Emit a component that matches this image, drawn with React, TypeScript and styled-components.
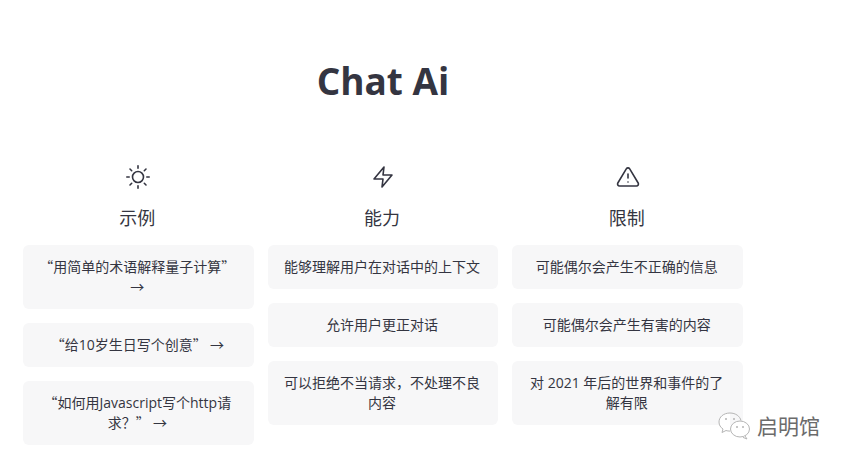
import styled, { createGlobalStyle } from "styled-components"
import { FiZap, FiAlertTriangle } from "react-icons/fi"

const GlobalStyle = createGlobalStyle`
  html, body {
    margin: 0;
    padding: 0;
    background: #fff;
  }
  * {
    box-sizing: border-box;
  }
`

const Page = styled.div`
  position: relative;
  width: 847px;
  height: 463px;
  overflow: hidden;
  padding: 53px 0 0 23px;
  color: #343541;
  font-family: "Open Sans", "Noto Sans CJK SC", sans-serif;
`

const Content = styled.div`
  width: 720px;
`

const Title = styled.h1`
  margin: 0 0 56px;
  height: 56px;
  line-height: 56px;
  font-size: 37px;
  font-weight: 700;
  text-align: center;
`

const Columns = styled.div`
  display: grid;
  grid-template-columns: repeat(3, minmax(0, 1fr));
  column-gap: 14px;
`

const Column = styled.div`
  display: flex;
  flex-direction: column;
  align-items: center;
`

const IconSlot = styled.div`
  display: flex;
  height: 24px;
  margin-bottom: 17px;
  font-size: 24px;
`

const Heading = styled.h2`
  margin: 0 2px 15px 0;
  height: 24px;
  line-height: 24px;
  font-size: 18px;
  font-weight: 400;
`

const CardList = styled.ul`
  width: 100%;
  margin: 0;
  padding: 0;
  list-style: none;
  display: flex;
  flex-direction: column;
  gap: 14px;
`

const Card = styled.li`
  padding: 12px 14px 12px 12px;
  border-radius: 6px;
  background: #f7f7f8;
  font-size: 14px;
  line-height: 20px;
  text-align: center;
`

// quotes and the arrow are full-width glyphs in the reference
const Wide = styled.span`
  font-family: "Noto Sans CJK SC", sans-serif;
  line-height: 0;
`

const Watermark = styled.div`
  position: absolute;
  right: 27px;
  top: 408px;
  display: flex;
  align-items: center;
  gap: 6px;
  color: #6b6b6b;
  font-size: 21px;
  line-height: 36px;
`

function SunIcon() {
  return (
    <svg width="24" height="24" viewBox="0 0 24 24" fill="none" stroke="currentColor" strokeWidth="1.6" strokeLinecap="round">
      <circle cx="12" cy="12" r="5.5" />
      <path d="M12 .8v2.4M12 20.8v2.4M.8 12h2.4M20.8 12h2.4M4 4l1.7 1.7M18.3 18.3L20 20M4 20l1.7-1.7M18.3 5.7L20 4" />
    </svg>
  )
}

function WechatMark() {
  return (
    <svg width="34" height="30" viewBox="0 0 34 30" fill="none" stroke="#b5b5b5" strokeWidth="1">
      <path d="M13 2C6.5 2 2 6 2 11c0 3 1.5 5.4 4 7l-1 3.5 4-2c1.2.4 2.5.6 4 .6" fill="#fff" />
      <path d="M13 2c5.5 0 10 3.2 11 7.6" />
      <circle cx="9" cy="8" r="1" fill="#b5b5b5" stroke="none" />
      <circle cx="17" cy="8" r="1" fill="#b5b5b5" stroke="none" />
      <ellipse cx="23" cy="18" rx="9.5" ry="8" fill="#fff" />
      <path d="M28 25l2 3-4-1.6" fill="#fff" />
      <circle cx="20" cy="16" r="1" fill="#b5b5b5" stroke="none" />
      <circle cx="26" cy="16" r="1" fill="#b5b5b5" stroke="none" />
    </svg>
  )
}

function Prompt({ text }: { text: string }) {
  return (
    <Card>
      <Wide>“</Wide>
      {text}
      <Wide>” →</Wide>
    </Card>
  )
}

const columns = [
  {
    icon: <SunIcon />,
    title: "示例",
    prompts: ["用简单的术语解释量子计算", "给10岁生日写个创意", "如何用Javascript写个http请求？"],
    cards: [],
  },
  {
    icon: <FiZap strokeWidth={1.6} />,
    title: "能力",
    prompts: [],
    cards: ["能够理解用户在对话中的上下文", "允许用户更正对话", "可以拒绝不当请求，不处理不良内容"],
  },
  {
    icon: <FiAlertTriangle strokeWidth={1.6} />,
    title: "限制",
    prompts: [],
    cards: ["可能偶尔会产生不正确的信息", "可能偶尔会产生有害的内容", "对 2021 年后的世界和事件的了解有限"],
  },
]

export default function App() {
  return (
    <Page>
      <GlobalStyle />
      <Content>
        <Title>Chat Ai</Title>
        <Columns>
          {columns.map((col) => (
            <Column key={col.title}>
              <IconSlot>{col.icon}</IconSlot>
              <Heading>{col.title}</Heading>
              <CardList>
                {col.prompts.map((text) => (
                  <Prompt key={text} text={text} />
                ))}
                {col.cards.map((text) => (
                  <Card key={text}>{text}</Card>
                ))}
              </CardList>
            </Column>
          ))}
        </Columns>
      </Content>
      <Watermark>
        <WechatMark />
        启明馆
      </Watermark>
    </Page>
  )
}
